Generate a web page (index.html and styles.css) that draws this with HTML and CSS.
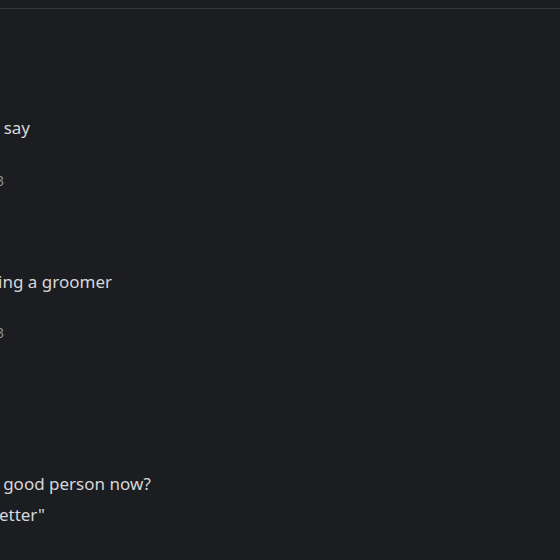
FILE: index.html
```html
<!DOCTYPE html>
<html>
<head>
<meta charset="utf-8">
<link rel="stylesheet" href="styles.css">
</head>
<body>
<div class="topbar"></div>
<div class="chat">
  <div class="msg m1">
    <div class="line t1"><span>I would say</span></div>
    <div class="line stamp s1"><span>Today at 11:23</span></div>
  </div>
  <div class="msg m2">
    <div class="line t2"><span>stop being a groomer</span></div>
    <div class="line stamp s2"><span>Today at 11:23</span></div>
  </div>
  <div class="msg m3">
    <div class="line t3"><span>are you a good person now?</span></div>
    <div class="line t4"><span>"better"</span></div>
  </div>
</div>
</body>
</html>
```
FILE: styles.css
```css
html, body {
  margin: 0;
  padding: 0;
  width: 560px;
  height: 560px;
  overflow: hidden;
  background: #1c1d21;
}
.topbar {
  height: 8px;
  border-bottom: 1px solid #34353a;
}
.chat {
  display: flex;
  flex-direction: column;
  font-family: "Noto Sans", sans-serif;
  color: #d6d7da;
}
.line {
  display: flex;
  justify-content: flex-end;
  font-size: 17px;
  line-height: 24px;
  white-space: nowrap;
}
.line span { flex: none; }
.stamp {
  font-size: 14px;
  line-height: 18px;
  color: #8e9096;
  width: 4px;
}
.m1 { margin-top: 107px; }
.t1 { width: 30px; }
.s1 { margin-top: 32px; }
.m2 { margin-top: 80px; }
.t2 { width: 112px; }
.s2 { margin-top: 30px; }
.m3 { margin-top: 130px; }
.t3 { width: 151px; }
.t4 { width: 45px; margin-top: 7px; }
```
